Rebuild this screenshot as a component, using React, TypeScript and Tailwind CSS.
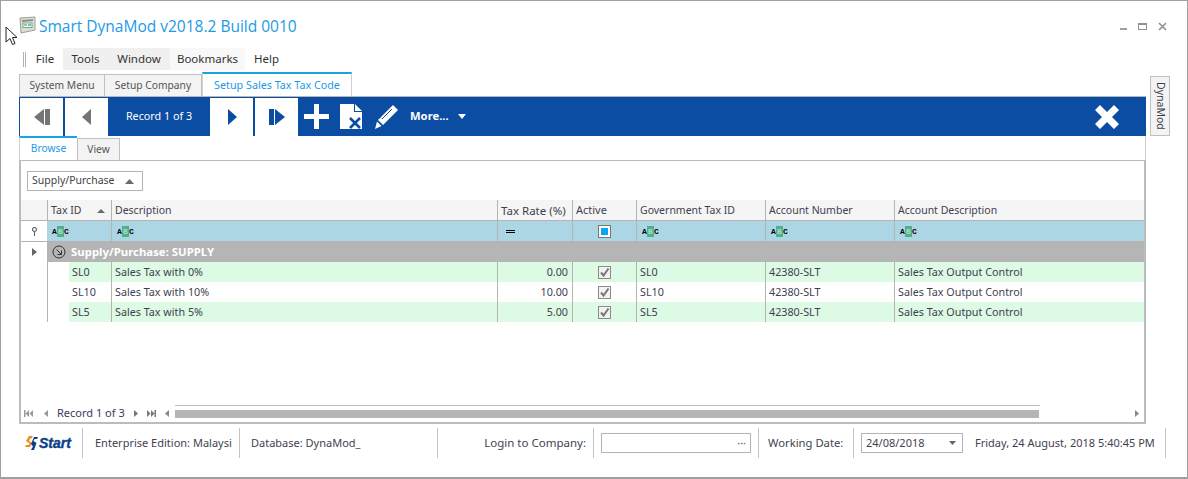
import { ReactNode } from "react";

const cols = "grid grid-cols-[26px_64px_386px_75px_64px_129px_129px_250px]";
const line = "border-l border-[#b4b4b4]";

const records = [
  { id: "SL0", desc: "Sales Tax with 0%", rate: "0.00", green: true },
  { id: "SL10", desc: "Sales Tax with 10%", rate: "10.00", green: false },
  { id: "SL5", desc: "Sales Tax with 5%", rate: "5.00", green: true },
];

function Abc() {
  return (
    <span className="flex items-center font-['Liberation_Mono',monospace] text-[8px] font-bold leading-[11px] text-black">
      <span className="w-[5px] text-center">A</span>
      <span className="w-[7px] bg-[#4fb08c] text-center text-[#a8dcc8]">B</span>
      <span className="w-[5px] text-center">C</span>
    </span>
  );
}

function NavButton({ children }: { children: ReactNode }) {
  return <div className="flex h-[38px] w-[43px] items-center justify-center bg-white">{children}</div>;
}

function HeaderCell({ children, extra = "" }: { children?: ReactNode; extra?: string }) {
  return <div className={`flex h-5 items-center pl-[3px] pt-px text-[10.5px] ${line} ${extra}`}>{children}</div>;
}

function Check() {
  return (
    <span className="flex h-[13px] w-[13px] items-center justify-center border border-[#8a8a8a] bg-[#f2f2f2]">
      <svg width="11" height="11" viewBox="0 0 11 11">
        <path d="M2 5.5 L4.5 8.5 L9.5 1.5" fill="none" stroke="#777" strokeWidth="2" />
      </svg>
    </span>
  );
}

function StatusDivider() {
  return <div className="h-[30px] w-px bg-[#c4c4c4]" />;
}

export default function App() {
  return (
    <div className="relative flex h-[479px] w-[1188px] flex-col overflow-hidden bg-white font-['Noto_Sans',sans-serif] text-[10.75px] text-[#3f3f50]">
      <div className="flex h-[479px] flex-col border border-b-2 border-[#a0a0a0]">
        {/* title bar */}
        <div className="flex h-[45px] shrink-0 items-center pl-[18px] pr-[20px] pt-[6px]">
          <svg width="17" height="18" viewBox="0 0 17 18" className="mb-1">
            <path d="M1 2 L16 1 V14 L2 17z" fill="#dcdcd8" stroke="#8a8a80" strokeWidth="0.8" />
            <path d="M3 4 L14 3.2 V5 L3 5.8z" fill="#8a8a80" />
            <rect x="4" y="7" width="9" height="4.5" fill="#fff" stroke="#4aa060" strokeWidth="0.8" />
            <path d="M5 9h3" stroke="#4aa060" strokeWidth="1.2" />
            <path d="M9 9h3" stroke="#2e7bc0" strokeWidth="1.2" />
          </svg>
          <span className="ml-[3px] font-['Open_Sans',sans-serif] text-[15.5px] leading-none text-[#1b9ae6]">
            Smart DynaMod v2018.2 Build 0010
          </span>
          <div className="mb-px ml-auto flex items-center gap-[11px]">
            <div className="mt-[5px] h-[2px] w-[7px] bg-[#a0a0a0]" />
            <div className="h-[7px] w-[9px] border border-t-2 border-[#909090]" />
            <svg width="9" height="9" viewBox="0 0 9 9">
              <path d="M1 1l7 7M8 1l-7 7" stroke="#909090" strokeWidth="1.6" />
            </svg>
          </div>
        </div>

        {/* menu */}
        <div className="flex h-[26px] shrink-0 items-center pl-[22px] text-[11.5px] text-[#333]">
          <div className="mr-px h-[15px] w-[3px] border-x border-[#b0b0b0]" />
          <span className="flex h-[22px] w-[36px] items-center justify-center">File</span>
          <span className="flex h-[22px] w-[45px] items-center justify-center bg-[#f0f0f0]">Tools</span>
          <span className="flex h-[22px] w-[62px] items-center justify-center bg-[#f0f0f0]">Window</span>
          <span className="flex h-[22px] w-[75px] items-center justify-center bg-[#f8f8f8]">Bookmarks</span>
          <span className="flex h-[22px] w-[43px] items-center justify-center">Help</span>
        </div>

        {/* content + side tab */}
        <div className="flex min-h-0 flex-1 pl-[18px]">
          <div className="flex w-[1127px] flex-col">
            <div className="flex h-[24px] shrink-0 items-end text-[10.25px]">
              <div className="flex h-[22px] w-[86px] items-center justify-center border border-b-0 border-[#c0c0c0] bg-[#f3f3f3] text-[#555]">
                System Menu
              </div>
              <div className="flex h-[22px] w-[97px] items-center justify-center border border-b-0 border-l-0 border-[#c0c0c0] bg-[#f3f3f3] text-[#555]">
                Setup Company
              </div>
              <div className="flex h-[24px] w-[150px] items-center justify-center border-x border-t-2 border-[#d0d0d0] border-t-[#1ba1e8] bg-white text-[10.75px] text-[#1b9ae6]">
                Setup Sales Tax Tax Code
              </div>
            </div>

            {/* toolbar */}
            <div className="flex h-[40px] shrink-0 items-center border-t border-[#b8b8b8] bg-[#0b4da2] pl-px pr-[27px]">
              <div className="flex gap-[2px]">
                <NavButton>
                  <svg width="16" height="16" viewBox="0 0 16 16">
                    <path d="M10 0v16L0 8z M11 0h5v16h-5z" fill="#757575" />
                  </svg>
                </NavButton>
                <NavButton>
                  <svg width="10" height="16" viewBox="0 0 10 16">
                    <path d="M9 0v16L0 8z" fill="#757575" />
                  </svg>
                </NavButton>
              </div>
              <div className="w-[102px] text-center text-[10.75px] text-white">Record 1 of 3</div>
              <div className="flex gap-[2px]">
                <NavButton>
                  <svg width="10" height="16" viewBox="0 0 10 16">
                    <path d="M1 0v16l9-8z" fill="#0b4da2" />
                  </svg>
                </NavButton>
                <NavButton>
                  <svg width="16" height="16" viewBox="0 0 16 16">
                    <path d="M0 0h5v16H0z M6 0v16l10-8z" fill="#0b4da2" />
                  </svg>
                </NavButton>
              </div>
              <svg width="25" height="25" viewBox="0 0 25 25" className="ml-[6px]">
                <path d="M10 0h5v10h10v5H15v10h-5V15H0v-5h10z" fill="#fff" />
              </svg>
              <svg width="23" height="26" viewBox="0 0 23 26" className="ml-[11px]">
                <path d="M0 0h14v8h8v17H0z M15 0l7 7h-7z" fill="#fff" />
                <path d="M10 14l10 10M20 14L10 24" stroke="#0b4da2" strokeWidth="2.6" />
              </svg>
              <svg width="25" height="26" viewBox="0 0 25 26" className="ml-[11px]">
                <path d="M19 1l5 5L9 21l-5-5z" fill="#fff" />
                <path d="M3 17.5l4.5 4.5L1 25z" fill="#fff" />
                <path d="M8 15l10-10" stroke="#0b4da2" strokeWidth="1" />
              </svg>
              <span className="ml-[11px] text-[11.25px] font-bold text-white">More...</span>
              <svg width="8" height="5" viewBox="0 0 8 5" className="ml-[9px]">
                <path d="M0 0h8L4 5z" fill="#fff" />
              </svg>
              <svg width="24" height="24" viewBox="0 0 24 24" className="ml-auto">
                <path d="M5 0l7 7 7-7 5 5-7 7 7 7-5 5-7-7-7 7-5-5 7-7-7-7z" fill="#fff" />
              </svg>
            </div>

            {/* browse / view */}
            <div className="flex h-[24px] shrink-0 items-end border-r border-[#d0d0d0] text-[10.25px]">
              <div className="flex h-[24px] w-[58px] items-center justify-center border-l border-t-2 border-[#d0d0d0] border-t-[#1ba1e8] text-[#1b9ae6]">
                Browse
              </div>
              <div className="flex h-[22px] w-[43px] items-center justify-center border border-b-0 border-[#c0c0c0] bg-[#f3f3f3] text-[#555]">
                View
              </div>
            </div>

            {/* grid panel */}
            <div className="flex h-[264px] shrink-0 flex-col border-2 border-t border-[#bcbcbc]">
              <div className="flex h-[39px] shrink-0 items-start pl-[6px] pt-[10px]">
                <div className="flex h-5 w-[116px] items-center border border-[#b4b4b4] pl-[4px] text-[10.5px] text-[#444]">
                  Supply/Purchase
                  <svg width="9" height="5" viewBox="0 0 9 5" className="ml-auto mr-[8px]">
                    <path d="M0 5h9L4.5 0z" fill="#6a6a6a" />
                  </svg>
                </div>
              </div>

              <div className={`${cols} h-[21px] shrink-0 border-b border-[#b4b4b4] bg-[#f5f5f5]`}>
                <div className="h-5" />
                <HeaderCell extra="justify-between pr-[6px]">
                  Tax ID
                  <svg width="8" height="4" viewBox="0 0 8 4">
                    <path d="M0 4h8L4 0z" fill="#6a6a6a" />
                  </svg>
                </HeaderCell>
                <HeaderCell>Description</HeaderCell>
                <HeaderCell>
                  <span className="text-[11.5px]">Tax Rate (%)</span>
                </HeaderCell>
                <HeaderCell>
                  <span className="text-[11px]">Active</span>
                </HeaderCell>
                <HeaderCell>Government Tax ID</HeaderCell>
                <HeaderCell>Account Number</HeaderCell>
                <HeaderCell>Account Description</HeaderCell>
              </div>

              <div className={`${cols} h-[21px] shrink-0 border-b border-[#b4b4b4]`}>
                <div className="flex items-center justify-center bg-white">
                  <svg width="7" height="9" viewBox="0 0 7 9">
                    <circle cx="3.5" cy="2.5" r="2" fill="none" stroke="#666" strokeWidth="1.2" />
                    <path d="M3.5 4v5" stroke="#666" strokeWidth="1.2" />
                  </svg>
                </div>
                <div className="flex items-center bg-[#add6e5] pl-[5px]"><Abc /></div>
                <div className={`flex items-center bg-[#add6e5] pl-[5px] ${line}`}><Abc /></div>
                <div className={`flex items-center bg-[#add6e5] pl-[8px] ${line}`}>
                  <div className="h-[3px] w-[9px] border-y border-black" />
                </div>
                <div className={`flex items-center justify-center bg-[#add6e5] ${line}`}>
                  <span className="flex h-[13px] w-[13px] items-center justify-center border border-[#777] bg-white">
                    <span className="h-[7px] w-[7px] bg-[#0aa5f5]" />
                  </span>
                </div>
                <div className={`flex items-center bg-[#add6e5] pl-[5px] ${line}`}><Abc /></div>
                <div className={`flex items-center bg-[#add6e5] pl-[5px] ${line}`}><Abc /></div>
                <div className={`flex items-center bg-[#add6e5] pl-[5px] ${line}`}><Abc /></div>
              </div>

              <div className="flex h-5 shrink-0">
                <div className="flex w-[26px] items-center justify-center">
                  <svg width="5" height="8" viewBox="0 0 5 8">
                    <path d="M0 0v8l5-4z" fill="#666" />
                  </svg>
                </div>
                <div className="flex flex-1 items-center bg-[#b5b5b5] pl-[5px] text-[11.4px] font-bold text-white">
                  <svg width="14" height="14" viewBox="0 0 14 14" className="mr-[5px]">
                    <circle cx="7" cy="7" r="6" fill="none" stroke="#333" strokeWidth="1" />
                    <path d="M4.5 4.5l5 5M9.5 5.5v4h-4" fill="none" stroke="#333" strokeWidth="1" />
                  </svg>
                  Supply/Purchase: SUPPLY
                </div>
              </div>

              {records.map((r) => {
                const bg = r.green ? "bg-[#dcfae4]" : "bg-white";
                return (
                  <div key={r.id} className={`${cols} h-5 shrink-0`}>
                    <div />
                    <div className={`flex ${line}`}>
                      <div className="w-[21px]" />
                      <div className={`flex flex-1 items-center pl-[3px] ${bg}`}>{r.id}</div>
                    </div>
                    <div className={`flex items-center pl-[3px] ${line} ${bg}`}>{r.desc}</div>
                    <div className={`flex items-center justify-end pr-1 ${line} ${bg}`}>{r.rate}</div>
                    <div className={`flex items-center justify-center ${line} ${bg}`}><Check /></div>
                    <div className={`flex items-center pl-[3px] ${line} ${bg}`}>{r.id}</div>
                    <div className={`flex items-center pl-[3px] ${line} ${bg}`}>42380-SLT</div>
                    <div className={`flex items-center pl-[3px] ${line} ${bg}`}>Sales Tax Output Control</div>
                  </div>
                );
              })}

              {/* grid footer */}
              <div className="mt-auto flex h-[17px] shrink-0 items-center pl-[3px] text-[11px] text-[#3a3a60]">
                <svg width="9" height="7" viewBox="0 0 9 7"><path d="M0 0h1.5v7H0z M5 0v7L1.5 3.5z M9 0v7L5.5 3.5z" fill="#999" /></svg>
                <svg width="4" height="7" viewBox="0 0 4 7" className="ml-[11px]"><path d="M4 0v7L0 3.5z" fill="#999" /></svg>
                <span className="ml-[9px]">Record 1 of 3</span>
                <svg width="4" height="7" viewBox="0 0 4 7" className="ml-[9px]"><path d="M0 0v7l4-3.5z" fill="#777" /></svg>
                <svg width="9" height="7" viewBox="0 0 9 7" className="ml-[9px]"><path d="M0 0v7l3.5-3.5z M4 0v7l3.5-3.5z M7.5 0H9v7H7.5z" fill="#777" /></svg>
                <svg width="4" height="7" viewBox="0 0 4 7" className="ml-[9px]"><path d="M4 0v7L0 3.5z" fill="#888" /></svg>
                <div className="relative ml-[6px] flex h-full flex-1 items-center">
                  <div className="absolute inset-x-0 top-0 h-px bg-[#c0c0c0]" />
                  <div className="h-[8px] w-[864px] bg-[#b5b5b5]" />
                </div>
                <svg width="4" height="7" viewBox="0 0 4 7" className="ml-[95px] mr-[5px]"><path d="M0 0v7l4-3.5z" fill="#888" /></svg>
              </div>
            </div>
          </div>

          <div className="ml-[4px] mt-[4px] flex h-[60px] w-5 items-center justify-center border border-[#c0c0c0] bg-[#f3f3f3] text-[10.5px] [writing-mode:vertical-rl]">
            DynaMod
          </div>
        </div>

        {/* status bar */}
        <div className="flex h-[52px] shrink-0 items-start pl-[24px] pt-[3px]">
          <div className="flex h-[30px] w-[57px] items-center">
            <svg width="13" height="15" viewBox="0 0 13 15">
              <path d="M4 0h4L6.5 2.5H5L4 5l3 2-2 4H0l1-2h3l.5-1.5L1 5z" fill="#f08a1c" />
              <path d="M9 1h4l-1 2H9.5l-1 2 3 2-2.5 7H6l1-2 1-1.5L6 8z" fill="#0b3f8a" />
            </svg>
            <span className="ml-px font-['Liberation_Sans',sans-serif] text-[14px] font-bold italic text-[#0b3f8a] [-webkit-text-stroke:0.4px_#0b3f8a]">Start</span>
          </div>
          <StatusDivider />
          <div className="flex h-[30px] w-[156px] items-center whitespace-nowrap pl-[12px] text-[11px]">Enterprise Edition: Malaysi</div>
          <StatusDivider />
          <div className="flex h-[30px] w-[197px] items-center pl-[11px] text-[11px]">Database: DynaMod_</div>
          <StatusDivider />
          <div className="flex h-[30px] w-[155px] items-center justify-end pr-[7px] text-[11.5px]">Login to Company:</div>
          <StatusDivider />
          <div className="flex h-[30px] items-center px-[7px]">
            <div className="flex h-5 w-[150px] items-center justify-end border border-[#b4b4b4] pr-[4px] text-[#555]">
              ···
            </div>
          </div>
          <StatusDivider />
          <div className="flex h-[30px] w-[94px] items-center pl-[9px] text-[11.25px]">Working Date:</div>
          <StatusDivider />
          <div className="flex h-[30px] items-center pl-[7px]">
            <div className="flex h-5 w-[102px] items-center border border-[#b4b4b4] pl-[4px] text-[11px]">
              24/08/2018
              <svg width="7" height="4" viewBox="0 0 7 4" className="ml-auto mr-[6px]"><path d="M0 0h7L3.5 4z" fill="#666" /></svg>
            </div>
          </div>
          <div className="flex h-[30px] w-[202px] items-center whitespace-nowrap pl-[12px] text-[11px]">Friday, 24 August, 2018 5:40:45 PM</div>
          <StatusDivider />
        </div>
      </div>

      {/* mouse pointer from the capture */}
      <svg width="13" height="20" viewBox="0 0 13 20" className="absolute left-[5px] top-[26px]">
        <path d="M1 1v15l4-3.5 2.5 6 2.5-1-2.5-6H12z" fill="#fff" stroke="#222" strokeWidth="1" />
      </svg>
    </div>
  );
}
